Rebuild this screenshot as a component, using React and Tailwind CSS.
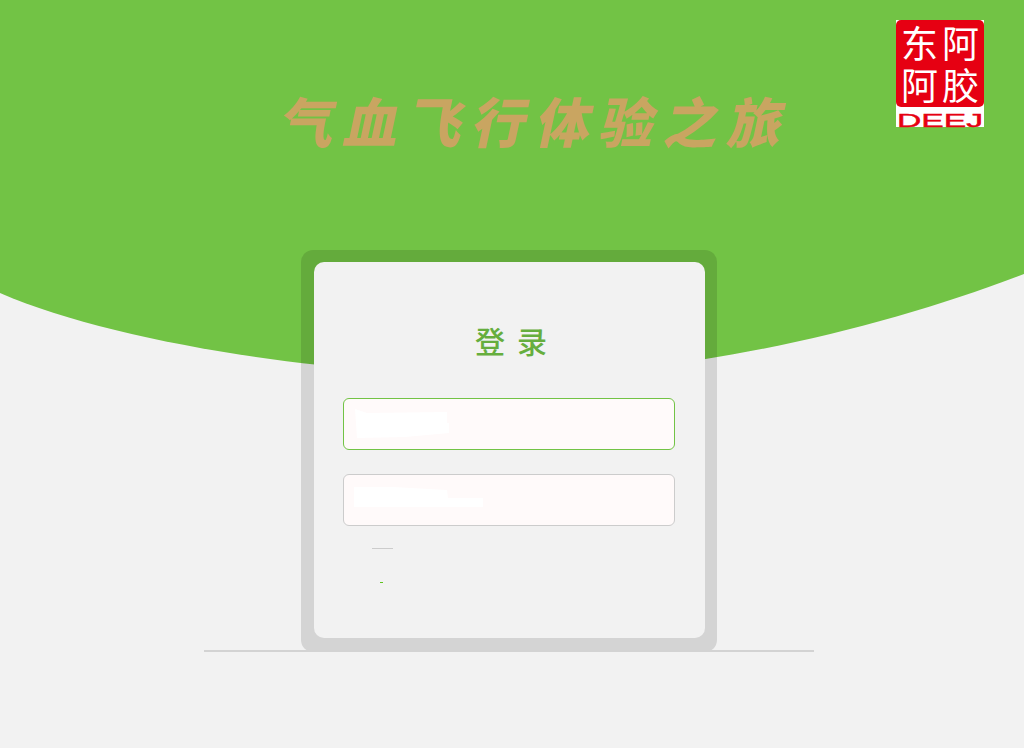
const cjk = { fontFamily: '"Noto Sans CJK SC", "Liberation Sans", sans-serif' };

function Seal() {
  return (
    <svg width="88" height="108" viewBox="0 0 88 108" className="block shrink-0">
      <rect width="88" height="107" fill="#fff" />
      <rect width="88" height="87" rx="5" fill="#e60012" />
      <g fill="#fff" fontFamily='"Noto Sans CJK SC", sans-serif' fontWeight="400" fontSize="37">
        <text x="5" y="38">东</text>
        <text x="46" y="38">阿</text>
        <text x="5" y="80">阿</text>
        <text x="46" y="80">胶</text>
      </g>
      <text
        x="1"
        y="106.5"
        textLength="86"
        lengthAdjust="spacingAndGlyphs"
        fontFamily='"Liberation Sans", sans-serif'
        fontSize="18"
        fill="#e60012"
        stroke="#e60012"
        strokeWidth="0.4"
      >
        DEEJ
      </text>
    </svg>
  );
}

function Field({ active, width, children }) {
  return (
    <div className={`h-[52px] rounded-md border bg-[#fffafa] pl-[10px] flex items-center ${active ? 'border-[#72c345]' : 'border-[#cccccc]'}`}>
      <svg width={width} height="32" className="block blur-[0.5px]">
        {children}
      </svg>
    </div>
  );
}

export default function App() {
  return (
    <div className="relative min-h-[748px] overflow-hidden bg-[#f2f2f2]" style={cjk}>
      <svg width="1024" height="380" viewBox="0 0 1024 380" className="absolute left-0 top-0">
        <path d="M0 0H1024V274C880 330 680 376 510 376C340 376 120 345 0 293Z" fill="#72c345" />
      </svg>

      <div className="relative">
        <header className="h-[250px] flex justify-between pl-[283px] pr-10 pt-5">
          <h1 className="mt-[62px] h-[76px] -skew-x-12 text-[54px] leading-[76px] font-black tracking-[10px] text-[#c9a561] whitespace-nowrap">
            气血飞行体验之旅
          </h1>
          <Seal />
        </header>

        <div className="flex flex-col items-center pr-[6px]">
          <div className="w-[416px] h-[402px] rounded-xl bg-black/[0.12] pl-[13px] pr-3 pt-3 pb-[14px]">
            <div className="h-full rounded-[10px] bg-[#f2f2f2] px-[29px] pt-[58px]">
              <h2 className="pl-[15px] text-center text-[30px] leading-10 font-medium tracking-[12px] text-[#66ae3e]">登录</h2>
              <div className="mt-[38px] flex flex-col gap-6 w-[332px]">
                <Field active width="96">
                  <polygon points="1,1 13,5 93,4 93,15 95,15 95,25 51,29 3,30" fill="#fff" />
                </Field>
                <Field width="132">
                  <polygon points="0,3 39,3 93,6 94,14 129,14 129,23 0,23" fill="#fff" />
                </Field>
              </div>
              <div className="mt-[22px] ml-[29px] w-[21px] h-px bg-[#cccccc]" />
              <div className="mt-[33px] ml-[37px] w-[3px] h-px bg-[#5fc41f]" />
            </div>
          </div>
          <div className="-mt-0.5 w-[610px] h-0.5 bg-[#d3d3d3]" />
        </div>
      </div>
    </div>
  );
}
